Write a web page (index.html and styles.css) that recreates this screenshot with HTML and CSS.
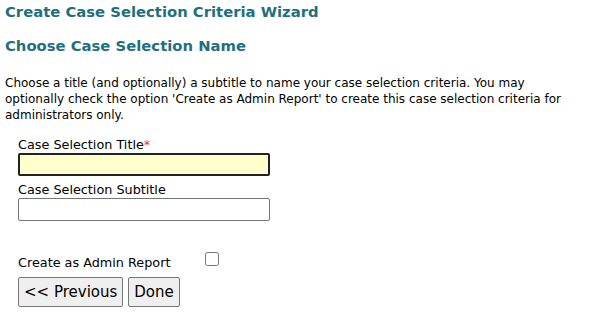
FILE: index.html
```html
<!DOCTYPE html>
<html lang="en">
<head>
    <meta charset="UTF-8">
    <title>Create Case Selection Criteria Wizard</title>
    <link rel="stylesheet" href="styles.css">
</head>
<body>
    <h1 class="wizard-title">Create Case Selection Criteria Wizard</h1>
    <h2 class="step-title">Choose Case Selection Name</h2>
    <p class="intro">Choose a title (and optionally) a subtitle to name your case selection criteria. You may optionally check the option 'Create as Admin Report' to create this case selection criteria for administrators only.</p>

    <div class="form">
        <label class="field-label" for="title">Case Selection Title<span class="req">*</span></label>
        <input type="text" id="title" class="text-input required">

        <label class="field-label" for="subtitle">Case Selection Subtitle</label>
        <input type="text" id="subtitle" class="text-input">

        <div class="admin-row">
            <label class="admin-label" for="admin">Create as Admin Report</label>
            <input type="checkbox" id="admin" class="check">
        </div>

        <div class="buttons">
            <button class="btn">&lt;&lt; Previous</button>
            <button class="btn">Done</button>
        </div>
    </div>
</body>
</html>
```

FILE: styles.css
```css
body {
    font-family: "DejaVu Sans", Verdana, sans-serif;
    font-size: 12px;
    color: #000;
    background-color: #fff;
    margin: 0;
    padding: 4px 5px;
}
.wizard-title {
    font-size: 14.8px;
    font-weight: bold;
    color: #1f6f7e;
    margin: 0;
    line-height: 16px;
}
.step-title {
    font-size: 14.8px;
    font-weight: bold;
    color: #1f6f7e;
    margin: 18px 0 0 0;
    line-height: 16px;
}
.intro {
    margin: 21px 0 0 0;
    line-height: 16px;
    padding-right: 10px;
}
.form {
    padding-left: 13px;
    margin-top: 14px;
    font-size: 12.8px;
}
.field-label {
    display: block;
    line-height: 16px;
}
.req {
    color: #d0404a;
}
.text-input {
    display: block;
    box-sizing: border-box;
    width: 252px;
    height: 23px;
    margin: 0 0 6px 0;
    border: 1px solid #767676;
    border-radius: 2px;
    background-color: #fff;
    font-family: inherit;
}
.text-input.required {
    background-color: #ffffcc;
    border: 2px solid #222;
}
.admin-row {
    display: flex;
    align-items: flex-end;
    margin-top: 31px;
}
.admin-label {
    width: 187px;
    line-height: 16px;
}
.check {
    width: 14px;
    height: 14px;
    margin: 0 0 5px 0;
}
.buttons {
    display: flex;
    gap: 5px;
    margin-top: 6px;
}
.btn {
    font-family: inherit;
    font-size: 15px;
    height: 30px;
    padding: 0 5px;
    background-color: #efefef;
    border: 1px solid #767676;
    border-radius: 2px;
    color: #000;
}
```
